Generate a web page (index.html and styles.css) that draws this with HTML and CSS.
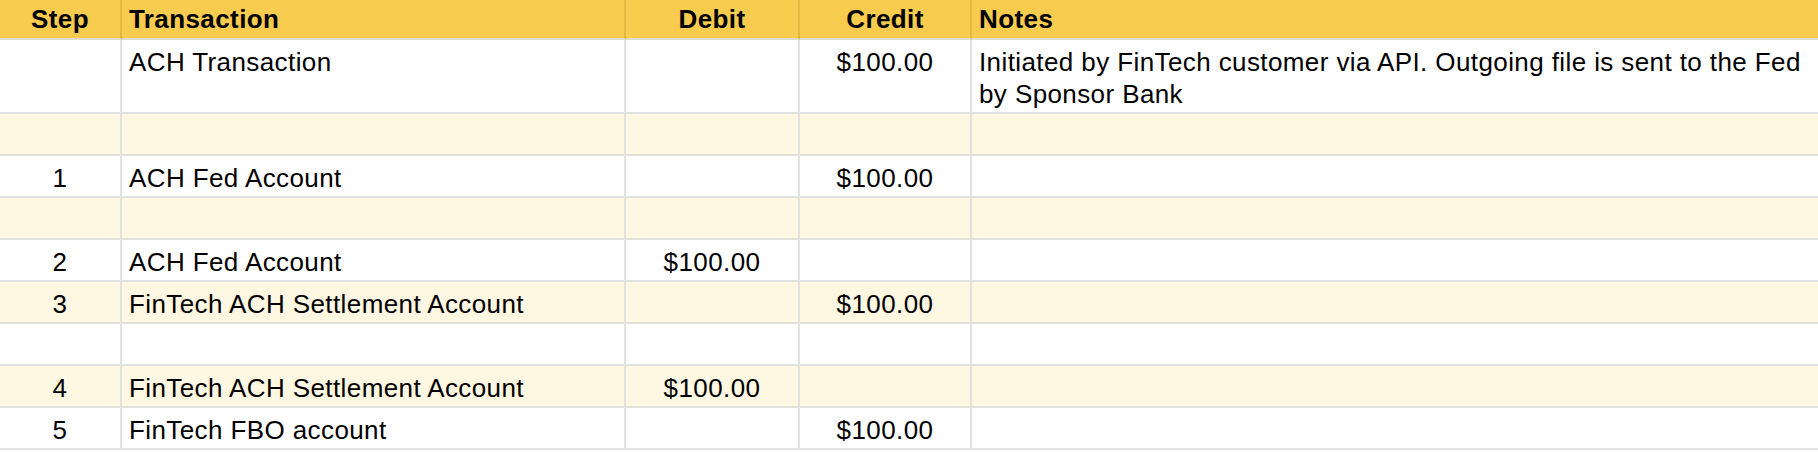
FILE: index.html
```html
<!DOCTYPE html>
<html lang="en">
<head>
<meta charset="utf-8">
<title>Ledger</title>
<link rel="stylesheet" href="styles.css">
</head>
<body>
<div class="sheet">
  <div class="row head">
    <div class="cell c">Step</div>
    <div class="cell">Transaction</div>
    <div class="cell c">Debit</div>
    <div class="cell c">Credit</div>
    <div class="cell">Notes</div>
  </div>
  <div class="row tall">
    <div class="cell c"></div>
    <div class="cell">ACH Transaction</div>
    <div class="cell c"></div>
    <div class="cell c">$100.00</div>
    <div class="cell">Initiated by FinTech customer via API. Outgoing file is sent to the Fed by Sponsor Bank</div>
  </div>
  <div class="row alt">
    <div class="cell c"></div>
    <div class="cell"></div>
    <div class="cell c"></div>
    <div class="cell c"></div>
    <div class="cell"></div>
  </div>
  <div class="row">
    <div class="cell c">1</div>
    <div class="cell">ACH Fed Account</div>
    <div class="cell c"></div>
    <div class="cell c">$100.00</div>
    <div class="cell"></div>
  </div>
  <div class="row alt">
    <div class="cell c"></div>
    <div class="cell"></div>
    <div class="cell c"></div>
    <div class="cell c"></div>
    <div class="cell"></div>
  </div>
  <div class="row">
    <div class="cell c">2</div>
    <div class="cell">ACH Fed Account</div>
    <div class="cell c">$100.00</div>
    <div class="cell c"></div>
    <div class="cell"></div>
  </div>
  <div class="row alt">
    <div class="cell c">3</div>
    <div class="cell">FinTech ACH Settlement Account</div>
    <div class="cell c"></div>
    <div class="cell c">$100.00</div>
    <div class="cell"></div>
  </div>
  <div class="row">
    <div class="cell c"></div>
    <div class="cell"></div>
    <div class="cell c"></div>
    <div class="cell c"></div>
    <div class="cell"></div>
  </div>
  <div class="row alt">
    <div class="cell c">4</div>
    <div class="cell">FinTech ACH Settlement Account</div>
    <div class="cell c">$100.00</div>
    <div class="cell c"></div>
    <div class="cell"></div>
  </div>
  <div class="row">
    <div class="cell c">5</div>
    <div class="cell">FinTech FBO account</div>
    <div class="cell c"></div>
    <div class="cell c">$100.00</div>
    <div class="cell"></div>
  </div>
</div>
</body>
</html>
```
FILE: styles.css
```css
html, body {
  margin: 0;
  padding: 0;
  background: #ffffff;
}

.sheet {
  width: 1818px;
  font-family: "Liberation Sans", Arial, sans-serif;
  font-size: 26px;
  line-height: 32px;
  letter-spacing: 0.4px;
  color: #000000;
}

.row {
  display: grid;
  grid-template-columns: 122px 504px 174px 172px 1fr;
  height: 42px;
  background: #ffffff;
}

.row.tall {
  height: 74px;
}

.row.alt {
  background: #fef7e1;
}

.row.head {
  height: 40px;
  background: #f7cb4d;
  font-weight: bold;
}

.cell {
  box-sizing: border-box;
  padding: 6px 7px 0 7px;
  border-right: 2px solid #e1e1e1;
  border-bottom: 2px solid #e1e1e1;
  white-space: normal;
  overflow: hidden;
}

.cell:last-child {
  border-right: none;
}

.row.alt .cell {
  border-bottom-color: #e3e1da;
}

.row.head .cell {
  padding-top: 3px;
  border-right-color: #e2b641;
  border-bottom-color: #dedbd0;
}

.row.head .cell:last-child {
  border-right: none;
}

.c {
  text-align: center;
}
```
